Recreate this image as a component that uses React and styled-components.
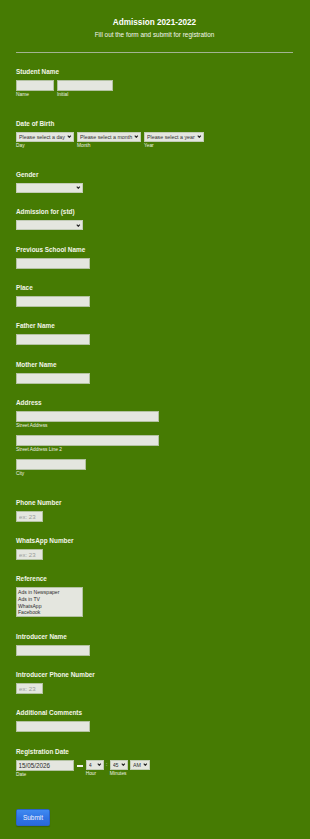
import React from 'react';
import styled, { createGlobalStyle } from 'styled-components';

const GlobalStyle = createGlobalStyle`
  html, body {
    margin: 0;
    padding: 0;
    background: #467b03;
  }
  body {
    font-family: "Liberation Sans", Arial, sans-serif;
    min-height: 839px;
  }
  * {
    box-sizing: border-box;
  }
`;

const Chevron = () => (
  <ChevronIcon viewBox="0 0 6 4" aria-hidden="true">
    <polyline points="1,0.8 3,3 5,0.8" />
  </ChevronIcon>
);

const SelectBox = ({ width, options }) => (
  <SelectWrap $w={width}>
    <Select defaultValue={options[0]}>
      {options.map((o) => (
        <option key={o} value={o}>
          {o}
        </option>
      ))}
    </Select>
    <Chevron />
  </SelectWrap>
);

const TextField = ({ label, width = 74, placeholder }) => (
  <Field>
    <Label>{label}</Label>
    <TextInput $w={width} placeholder={placeholder} />
  </Field>
);

const App = () => {
  return (
    <Page>
      <GlobalStyle />
      <Header>
        <Title>Admission 2021-2022</Title>
        <Subtitle>Fill out the form and submit for registration</Subtitle>
      </Header>

      <FieldList>
        <Field>
          <Label>Student Name</Label>
          <Row>
            <SubField>
              <TextInput $w={38} />
              <SubLabel>Name</SubLabel>
            </SubField>
            <SubField>
              <TextInput $w={56} />
              <SubLabel>Initial</SubLabel>
            </SubField>
          </Row>
        </Field>

        <Field>
          <Label>Date of Birth</Label>
          <Row>
            <SubField>
              <SelectBox width={58} options={['Please select a day']} />
              <SubLabel>Day</SubLabel>
            </SubField>
            <SubField>
              <SelectBox width={64} options={['Please select a month']} />
              <SubLabel>Month</SubLabel>
            </SubField>
            <SubField>
              <SelectBox width={60} options={['Please select a year']} />
              <SubLabel>Year</SubLabel>
            </SubField>
          </Row>
        </Field>

        <Field>
          <Label>Gender</Label>
          <SelectBox width={67} options={['', 'Male', 'Female']} />
        </Field>

        <Field>
          <Label>Admission for (std)</Label>
          <SelectBox width={67} options={['', 'LKG', 'UKG', '1st']} />
        </Field>

        <TextField label="Previous School Name" />
        <TextField label="Place" />
        <TextField label="Father Name" />
        <TextField label="Mother Name" />

        <Field>
          <Label>Address</Label>
          <SubField>
            <TextInput $w={143} />
            <SubLabel $tight>Street Address</SubLabel>
          </SubField>
          <SubField>
            <TextInput $w={143} />
            <SubLabel $tight>Street Address Line 2</SubLabel>
          </SubField>
          <SubField>
            <TextInput $w={70} />
            <SubLabel>City</SubLabel>
          </SubField>
        </Field>

        <TextField label="Phone Number" width={27} placeholder="ex: 23" />
        <TextField label="WhatsApp Number" width={27} placeholder="ex: 23" />

        <Field>
          <Label>Reference</Label>
          <ListBox multiple size={4} defaultValue={[]}>
            <option>Ads in Newspaper</option>
            <option>Ads in TV</option>
            <option>WhatsApp</option>
            <option>Facebook</option>
          </ListBox>
        </Field>

        <TextField label="Introducer Name" />
        <TextField label="Introducer Phone Number" width={27} placeholder="ex: 23" />
        <TextField label="Additional Comments" />

        <Field>
          <Label>Registration Date</Label>
          <Row $gap={0}>
            <SubField>
              <DateInput defaultValue="15/05/2026" />
              <SubLabel>Date</SubLabel>
            </SubField>
            <Dash />
            <SubField>
              <SelectBox width={18} options={['4']} />
              <TimeLabel>Hour</TimeLabel>
            </SubField>
            <Colon>:</Colon>
            <SubField>
              <SelectBox width={18} options={['45']} />
              <TimeLabel>Minutes</TimeLabel>
            </SubField>
            <Spacer />
            <SubField>
              <SelectBox width={20} options={['AM', 'PM']} />
            </SubField>
          </Row>
        </Field>
      </FieldList>

      <ButtonBar>
        <SubmitButton type="button">Submit</SubmitButton>
      </ButtonBar>
    </Page>
  );
};

const Page = styled.div`
  padding: 18px 17px 20px 16px;
  min-height: 839px;
  background: #467b03;
  color: #f5f6ee;
`;

const Header = styled.div`
  text-align: center;
  padding-bottom: 12.5px;
  border-bottom: 1px solid #a3b392;
`;

const Title = styled.h1`
  margin: 0;
  font-size: 8.2px;
  line-height: 10px;
  font-weight: 700;
  color: #ffffff;
`;

const Subtitle = styled.p`
  margin: 3.3px 0 0;
  font-size: 6.4px;
  line-height: 8px;
  color: #f4f6ee;
`;

const FieldList = styled.ul`
  list-style: none;
  margin: 0;
  padding: 15.3px 0 0;
`;

const Field = styled.li`
  margin-bottom: 15.3px;
`;

const Label = styled.label`
  display: block;
  font-size: 6.4px;
  line-height: 8px;
  font-weight: 700;
  color: #f3f5e9;
  margin-bottom: 4px;
  white-space: nowrap;
`;

const Row = styled.div`
  display: flex;
  align-items: flex-start;
  gap: ${({ $gap }) => ($gap === undefined ? 3 : $gap)}px;
`;

const SubField = styled.div`
  display: flex;
  flex-direction: column;
  align-items: flex-start;
`;

const SubLabel = styled.span`
  display: block;
  font-size: 4.8px;
  line-height: 8px;
  height: ${({ $tight }) => ($tight ? '13px' : '13.7px')};
  color: #eef1e4;
  white-space: nowrap;
`;

const TimeLabel = styled(SubLabel)`
  line-height: 5px;
  margin-top: 1px;
`;

const TextInput = styled.input`
  display: block;
  width: ${({ $w }) => $w}px;
  height: 11px;
  margin: 0;
  padding: 0 2px;
  border: 1px solid #b3c2a1;
  border-radius: 0;
  background: #e4e6df;
  font-family: "Liberation Sans", Arial, sans-serif;
  font-size: 6.1px;
  color: #333;
  outline: none;

  &::placeholder {
    color: #9a9c98;
  }
`;

const DateInput = styled(TextInput)`
  width: 58px;
  font-size: 6.3px;
  padding: 0 1px 0 1.5px;
  color: #2c2c2c;
`;

const SelectWrap = styled.div`
  position: relative;
  width: ${({ $w }) => $w}px;
  height: 10px;
`;

const Select = styled.select`
  appearance: none;
  -webkit-appearance: none;
  display: block;
  width: 100%;
  height: 100%;
  margin: 0;
  padding: 0 6px 0 2px;
  border: 1px solid #c2ccb6;
  border-radius: 0;
  background: #e4e6df;
  font-family: "Liberation Sans", Arial, sans-serif;
  font-size: 5.3px;
  line-height: 8px;
  color: #2f2f2f;
  outline: none;
`;

const ChevronIcon = styled.svg`
  position: absolute;
  right: 2px;
  top: 3.2px;
  width: 4.6px;
  height: 3.2px;
  pointer-events: none;
  fill: none;
  stroke: #222;
  stroke-width: 1.4;
`;

const ListBox = styled.select`
  display: block;
  width: 67px;
  height: 30px;
  margin: 0;
  padding: 1px 0 0;
  border: 1px solid #b3c2a1;
  border-radius: 0;
  background: #e4e6df;
  font-family: "Liberation Sans", Arial, sans-serif;
  font-size: 5.1px;
  color: #2c2c2c;
  overflow: hidden;
  outline: none;

  option {
    padding: 0 1px;
    height: 6.6px;
    line-height: 6.6px;
    min-height: 6.6px;
  }
`;

const Dash = styled.span`
  width: 6.6px;
  height: 2px;
  margin: 5px 2.4px 0 2.7px;
  background: #f2f4ec;
`;

const Colon = styled.span`
  width: 6px;
  text-align: center;
  font-size: 6px;
  line-height: 8px;
  color: #f2f4ec;
`;

const Spacer = styled.span`
  width: 2.3px;
`;

const ButtonBar = styled.div`
  padding-top: 6.3px;
`;

const SubmitButton = styled.button`
  width: 34px;
  height: 17px;
  padding: 0;
  border: 1px solid #2a63c8;
  border-radius: 1.5px;
  background: linear-gradient(to bottom, #3f8af2 0%, #2f73e3 55%, #2a6ad9 100%);
  box-shadow: 0 1px 1px rgba(0, 0, 0, 0.2);
  font-family: "Liberation Sans", Arial, sans-serif;
  font-size: 6.5px;
  color: #eef3ff;
  cursor: pointer;
`;

export default App;
